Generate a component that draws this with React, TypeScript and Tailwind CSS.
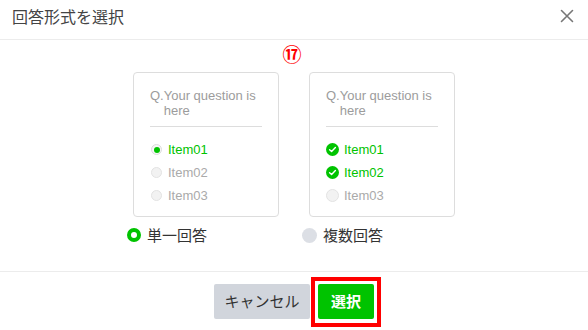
import React from "react";

const GREEN = "#00c300";

function CheckIcon() {
  return (
    <svg width="13" height="13" viewBox="0 0 13 13" className="shrink-0">
      <circle cx="6.5" cy="6.5" r="6.5" fill={GREEN} />
      <path d="M3.6 6.8 L5.6 8.6 L9.4 4.6" fill="none" stroke="#fff" strokeWidth="1.4" strokeLinecap="round" strokeLinejoin="round" />
    </svg>
  );
}

function RadioOn() {
  return (
    <span className="w-[11px] h-[11px] rounded-full border border-[#dcdcdc] bg-[#f7f7f7] flex items-center justify-center shrink-0 ml-px mr-px">
      <span className="w-[6px] h-[6px] rounded-full bg-[#00c300]" />
    </span>
  );
}

function RadioOff() {
  return <span className="w-[11px] h-[11px] rounded-full border border-[#e3e3e3] bg-[#f2f2f2] shrink-0 ml-px mr-px" />;
}

function CheckOff() {
  return <span className="w-[13px] h-[13px] rounded-full border border-[#e3e3e3] bg-[#f2f2f2] shrink-0" />;
}

function Card({ multi }: { multi: boolean }) {
  const items = ["Item01", "Item02", "Item03"];
  const selected = multi ? [true, true, false] : [true, false, false];
  return (
    <div className="w-[146px] h-[145px] border border-[#dddddd] rounded-[4px] px-[16px] pt-[15px] bg-white">
      <div className="flex text-[13px] leading-[15px] text-[#9c9c9c]">
        <span className="shrink-0">Q.</span>
        <span>Your question is here</span>
      </div>
      <div className="mt-[8px] h-px bg-[#dddddd]" />
      <div className="mt-[11px] flex flex-col">
        {items.map((it, i) => (
          <div key={it} className="h-[23px] flex items-center gap-[5px]">
            {multi ? (selected[i] ? <CheckIcon /> : <CheckOff />) : selected[i] ? <RadioOn /> : <RadioOff />}
            <span className={"text-[13px] leading-[15px] " + (selected[i] ? "text-[#00c300]" : "text-[#aaaaaa]")}>{it}</span>
          </div>
        ))}
      </div>
    </div>
  );
}

export default function App() {
  return (
    <div
      className="w-[588px] h-[330px] bg-white flex flex-col overflow-hidden"
      style={{ fontFamily: '"Liberation Sans", "Noto Sans CJK JP", sans-serif' }}
    >
      <div className="h-[40px] border-b border-[#ececec] flex items-start justify-between pl-[12px] pr-[14px] pt-[4px] shrink-0">
        <span className="text-[16px] leading-[24px] text-[#444444]" style={{ fontFamily: '"Noto Sans CJK JP", sans-serif' }}>
          回答形式を選択
        </span>
        <svg width="14" height="14" viewBox="0 0 14 14" className="mt-[5px]">
          <path d="M1.5 1.5 L12.5 12.5 M12.5 1.5 L1.5 12.5" stroke="#777" strokeWidth="1.6" strokeLinecap="round" />
        </svg>
      </div>
      <div className="flex-1 flex flex-col items-center">
        <div
          className="mt-[5px] h-[18px] leading-[18px] text-[19px] font-bold text-[#ff0000] -ml-[4px]"
          style={{ fontFamily: '"Noto Sans CJK JP", sans-serif' }}
        >
          ⑰
        </div>
        <div className="mt-[9px] grid grid-cols-[146px_146px] gap-x-[30px]">
          <Card multi={false} />
          <Card multi={true} />
          <div className="mt-[8px] -ml-[6px] h-[20px] flex items-center gap-[6px]">
            <span className="w-[14px] h-[14px] rounded-full border-[4px] border-[#00c300] bg-white shrink-0" />
            <span className="text-[15px] text-[#333333]" style={{ fontFamily: '"Noto Sans CJK JP", sans-serif' }}>
              単一回答
            </span>
          </div>
          <div className="mt-[8px] -ml-[7px] h-[20px] flex items-center gap-[6px]">
            <span className="w-[15px] h-[15px] rounded-full bg-[#dcdfe5] shrink-0" />
            <span className="text-[15px] text-[#333333]" style={{ fontFamily: '"Noto Sans CJK JP", sans-serif' }}>
              複数回答
            </span>
          </div>
        </div>
      </div>
      <div
        className="h-[59px] border-t border-[#ececec] shrink-0 flex justify-center items-start pt-[12px] gap-[8px]"
        style={{ fontFamily: '"Noto Sans CJK JP", sans-serif' }}
      >
        <button className="w-[96px] h-[35px] rounded-[2px] bg-[#d1d5dc] text-[#333333] text-[15px]">キャンセル</button>
        <div className="relative">
          <button className="w-[56px] h-[35px] rounded-[2px] bg-[#00c300] text-white text-[15px] font-bold">選択</button>
          <span className="absolute -left-[7px] -right-[7px] -top-[7px] -bottom-[8px] border-[4px] border-[#ff0000] pointer-events-none" />
        </div>
      </div>
    </div>
  );
}
